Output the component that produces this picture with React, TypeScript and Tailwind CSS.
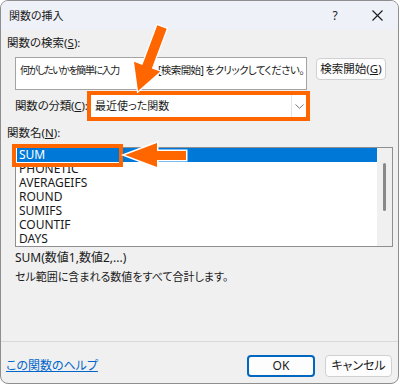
import React from "react";

const items = ["SUM", "PHONETIC", "AVERAGEIFS", "ROUND", "SUMIFS", "COUNTIF", "DAYS"];

export default function App() {
  return (
    <div
      className="relative w-[400px] h-[387px] bg-white text-[#1a1a1a] [font-feature-settings:'palt']"
      style={{ fontFamily: '"Noto Sans", "Noto Sans CJK JP", sans-serif' }}
    >
      <div className="w-[399px] h-[384px] rounded-[8px] border border-[#8e8e8e] bg-[#f0f0f0] overflow-hidden flex flex-col">
        {/* title bar */}
        <div className="h-[29px] shrink-0 bg-[#eef1f8] flex items-center">
          <div className="pl-[8px] text-[11px] leading-[16px] flex-1">関数の挿入</div>
          <div className="w-[42px] h-[29px] flex items-center justify-center text-[12px]">?</div>
          <div className="w-[42px] h-[29px] flex items-center justify-center">
            <svg width="11" height="11" viewBox="0 0 11 11">
              <path d="M0.5 0.5 L10.5 10.5 M10.5 0.5 L0.5 10.5" stroke="#1a1a1a" strokeWidth="1.1" />
            </svg>
          </div>
        </div>

        {/* search label */}
        <div className="mt-[5px] pl-[6px] text-[11.5px] leading-[16px]">
          関数の検索(<span className="underline">S</span>):
        </div>

        {/* search row */}
        <div className="mt-[6px] pl-[14px] flex items-start">
          <div className="w-[292px] h-[33px] bg-white border border-[#a3a3a3] pl-[4px] pt-[5px] text-[10.5px] leading-[14px] whitespace-nowrap overflow-hidden flex">
            <span className="w-[106px] shrink-0 text-[10px] tracking-[-1.4px]">何がしたいかを簡単に入力</span>
            <span className="w-[32px] shrink-0 pl-[8px] text-[10px] tracking-[-1.5px]">して、</span>
            <span className="tracking-[-0.6px]">[検索開始] をクリックしてください。</span>
          </div>
          <div className="ml-[9px] mt-[1px] w-[70px] h-[22px] bg-[#fdfdfd] border border-[#d0d0d0] rounded-[4px] flex items-center justify-center text-[11.5px]">
            検索開始(<span className="underline">G</span>)
          </div>
        </div>

        {/* category row */}
        <div className="mt-[1px] pl-[14px] flex items-center">
          <div className="w-[72px] shrink-0 text-[11.5px] tracking-[-0.2px] leading-[16px] whitespace-nowrap">
            関数の分類(<span className="underline">C</span>):
          </div>
          <div className="w-[223px] h-[30px] border-[4px] border-[#ff6600] bg-white flex">
            <div className="flex-1 pl-[4px] flex items-center text-[11px]">最近使った関数</div>
            <div className="w-[15px] border-l border-[#e3e3e3] flex items-center justify-center">
              <svg width="9" height="5" viewBox="0 0 9 5">
                <path d="M0.5 0.5 L4.5 4.3 L8.5 0.5" stroke="#7a7a7a" strokeWidth="1" fill="none" />
              </svg>
            </div>
          </div>
        </div>

        {/* function name label */}
        <div className="mt-[4px] pl-[6px] text-[11.5px] leading-[16px]">
          関数名(<span className="underline">N</span>):
        </div>

        {/* list */}
        <div className="mt-[6px] ml-[14px] w-[378px] h-[100px] border border-[#8f8f8f] bg-white flex">
          <div className="flex-1 flex flex-col">
            {items.map((it, i) => (
              <div
                key={it}
                className={
                  i === 0
                    ? "ml-px h-[14px] leading-[14px] text-[12px] pl-[2px] bg-[#0078d7] text-white"
                    : "ml-px h-[14px] leading-[14px] text-[12px] pl-[2px]"
                }
              >
                {it}
              </div>
            ))}
          </div>
          <div className="w-[15px] bg-[#f0f0f0] pt-[15px] pl-[6px]">
            <div className="w-[3px] h-[48px] rounded-full bg-[#8a8a8a]" />
          </div>
        </div>

        {/* description */}
        <div className="mt-[3px] pl-[14px] text-[12px] leading-[16px]">SUM(数値1,数値2,...)</div>
        <div className="mt-[3px] pl-[14px] text-[11px] leading-[16px]">セル範囲に含まれる数値をすべて合計します。</div>

        {/* separator */}
        <div className="mt-[56px] h-px bg-[#d9d9d9]" />

        {/* bottom buttons */}
        <div className="mt-[13px] flex items-center pr-[6px]">
          <div className="pl-[5px] text-[12px] leading-[16px] text-[#0066cc] underline">この関数のヘルプ</div>
          <div className="ml-auto w-[68px] h-[22px] bg-[#fdfdfd] border-2 border-[#0067c0] rounded-[4px] flex items-center justify-center text-[12px]">
            OK
          </div>
          <div className="ml-[10px] w-[67px] h-[22px] bg-[#fdfdfd] border border-[#d0d0d0] rounded-[4px] flex items-center justify-center text-[12px]">
            キャンセル
          </div>
        </div>
      </div>

      {/* annotation overlay */}
      <svg className="absolute left-0 top-0 pointer-events-none" width="400" height="387" viewBox="0 0 400 387">
        <rect x="14" y="146" width="107" height="19" fill="none" stroke="#ff6600" strokeWidth="4" />
        <polygon
          points="157.3,25.25 166.7,28.75 151.8,68.5 160.2,71.6 138,91 134,61.8 142.4,64.9"
          fill="#ff6600"
          stroke="#ffffff"
          strokeWidth="2.5"
          strokeLinejoin="miter"
          paintOrder="stroke"
        />
        <polygon
          points="125,155 157,143 157,151 186,151 186,160 157,160 157,167"
          fill="#ff6600"
          stroke="#ffffff"
          strokeWidth="3"
          strokeLinejoin="miter"
          paintOrder="stroke"
        />
      </svg>
    </div>
  );
}
